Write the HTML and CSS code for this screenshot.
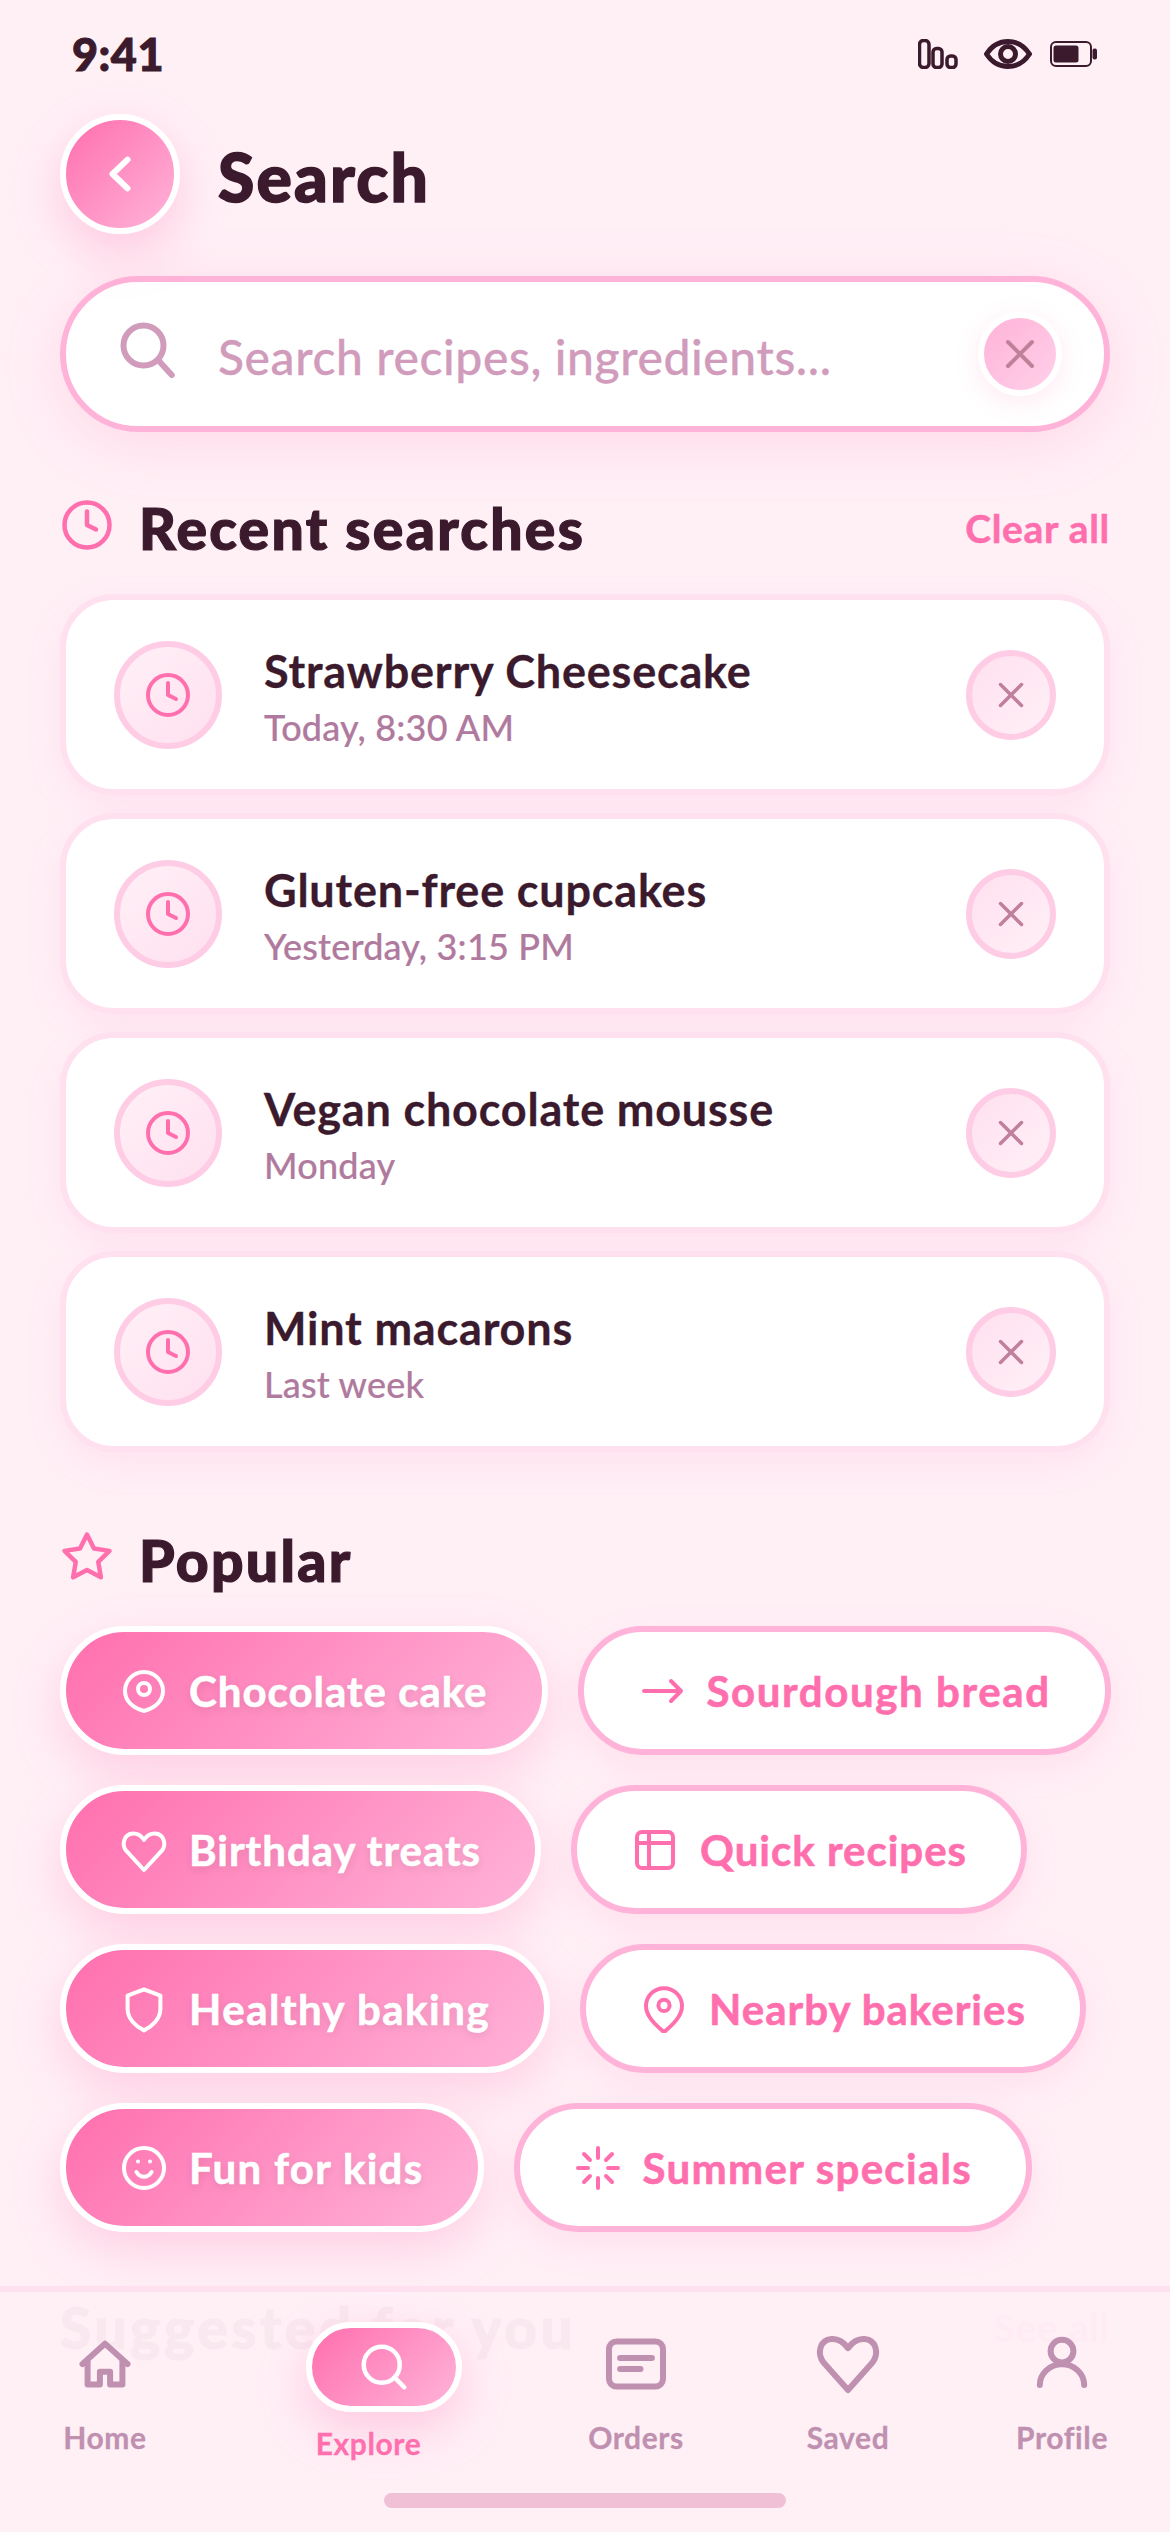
FILE: index.html
```html
<!DOCTYPE html>
<html lang="en">
<head>
<meta charset="utf-8">
<title>Search</title>
<link rel="stylesheet" href="styles.css">
</head>
<body>
<svg class="defs" width="0" height="0" aria-hidden="true">
  <symbol id="clock" viewBox="0 0 24 24"><circle cx="12" cy="12" r="10"/><polyline points="12 6 12 12 16 14"/></symbol>
  <symbol id="close" viewBox="0 0 24 24"><path d="M6 6l12 12M18 6L6 18"/></symbol>
</svg>
<main class="screen">
  <div class="status">
    <span class="time">9:41</span>
    <div class="status-icons">
      <svg class="st-bars" viewBox="0 0 40 30"><rect x="1.500" y="1.500" width="9.500" height="27" rx="4"/><rect x="15" y="9.500" width="9" height="19" rx="3.500"/><rect x="29" y="17" width="9" height="11.500" rx="3.500"/></svg>
      <svg class="st-eye" viewBox="0 0 48 30"><path d="M2.500 15C8 6.500 15.500 2.500 24 2.500S40 6.500 45.500 15C40 23.500 32.500 27.500 24 27.500S8 23.500 2.500 15Z"/><circle cx="24" cy="15" r="7.500"/></svg>
      <svg class="st-batt" viewBox="0 0 47 26"><rect class="b-out" x="1" y="1" width="40" height="24" rx="5"/><rect class="b-fill" x="3.500" y="4.500" width="25" height="17" rx="2.500"/><rect class="b-fill" x="42.500" y="7.500" width="4.500" height="11" rx="2"/></svg>
    </div>
  </div>

  <header class="top">
    <button class="back" aria-label="Back"><svg class="ic-72" viewBox="0 0 24 24"><path d="M14.500 7.200L9.500 12l5 4.800"/></svg></button>
    <h1>Search</h1>
  </header>

  <div class="searchbar">
    <svg class="searchbar-ic" viewBox="0 0 24 24"><circle cx="11" cy="11" r="8"/><path d="M17 17l5.300 5.800"/></svg>
    <span class="placeholder">Search recipes, ingredients...</span>
    <button class="clear" aria-label="Clear"><svg class="ic-48"><use href="#close"/></svg></button>
  </div>

  <section class="recent">
    <div class="sec-head">
      <svg class="sec-ic"><use href="#clock"/></svg>
      <h2>Recent searches</h2>
      <a class="sec-link">Clear all</a>
    </div>
    <ul class="cards">
      <li class="card">
        <span class="card-ic"><svg class="ic-48"><use href="#clock"/></svg></span>
        <div class="card-text"><strong>Strawberry Cheesecake</strong><small>Today, 8:30 AM</small></div>
        <button class="remove" aria-label="Remove"><svg class="ic-42"><use href="#close"/></svg></button>
      </li>
      <li class="card">
        <span class="card-ic"><svg class="ic-48"><use href="#clock"/></svg></span>
        <div class="card-text"><strong>Gluten-free cupcakes</strong><small>Yesterday, 3:15 PM</small></div>
        <button class="remove" aria-label="Remove"><svg class="ic-42"><use href="#close"/></svg></button>
      </li>
      <li class="card">
        <span class="card-ic"><svg class="ic-48"><use href="#clock"/></svg></span>
        <div class="card-text"><strong>Vegan chocolate mousse</strong><small>Monday</small></div>
        <button class="remove" aria-label="Remove"><svg class="ic-42"><use href="#close"/></svg></button>
      </li>
      <li class="card">
        <span class="card-ic"><svg class="ic-48"><use href="#clock"/></svg></span>
        <div class="card-text"><strong>Mint macarons</strong><small>Last week</small></div>
        <button class="remove" aria-label="Remove"><svg class="ic-42"><use href="#close"/></svg></button>
      </li>
    </ul>
  </section>

  <section class="popular">
    <div class="sec-head">
      <svg class="sec-ic" viewBox="0 0 24 24"><polygon points="12 2 15.090 8.260 22 9.270 17 14.140 18.180 21.020 12 17.770 5.820 21.020 7 14.140 2 9.270 8.910 8.260"/></svg>
      <h2>Popular</h2>
    </div>
    <div class="chips">
      <div class="chip-row">
        <a class="chip hot tight"><svg class="ic-48" viewBox="0 0 24 24"><path d="M12 2.500a9.500 9.500 0 0 1 9.500 9.500c0 5-4 8.500-9.500 10-5.500-1.500-9.500-5-9.500-10A9.500 9.500 0 0 1 12 2.500Z"/><circle cx="12" cy="11" r="3"/></svg>Chocolate cake</a>
        <a class="chip loose"><svg class="ic-48" viewBox="0 0 24 24"><path d="M3 12h18M16.500 7l5 5-5 5"/></svg>Sourdough bread</a>
      </div>
      <div class="chip-row">
        <a class="chip hot tight"><svg class="ic-48" viewBox="0 0 24 24"><path d="M12 22L3.300 12.600C.5 9.300 2 4 6.500 3.800 9 3.700 10.700 5 12 6.900c1.300-1.900 3-3.200 5.500-3.100 4.500.2 6 5.500 3.200 8.800Z"/></svg>Birthday treats</a>
        <a class="chip tight"><svg class="ic-48" viewBox="0 0 24 24"><rect x="3" y="3" width="18" height="18" rx="2.500"/><path d="M3 8.500h18M9 3v18"/></svg>Quick recipes</a>
      </div>
      <div class="chip-row">
        <a class="chip hot mid"><svg class="ic-48" viewBox="0 0 24 24"><path d="M12 2.200l8.200 3.100V12c0 5-4.200 8.800-8.200 10.700C8 20.800 3.800 17 3.800 12V5.300Z"/></svg>Healthy baking</a>
        <a class="chip tight"><svg class="ic-48" viewBox="0 0 24 24"><path d="M12 1.600c5 0 9 4 9 8.900 0 5.500-5.500 10-9 13.100-3.500-3.100-9-7.600-9-13.100 0-4.900 4-8.900 9-8.900Z"/><circle cx="12" cy="10.200" r="2.800"/></svg>Nearby bakeries</a>
      </div>
      <div class="chip-row">
        <a class="chip hot"><svg class="ic-48" viewBox="0 0 24 24"><circle cx="12" cy="12" r="10"/><path d="M8.200 14c2 3.200 5.600 3.200 7.600 0M9 8.800h.01M15 8.800h.01"/></svg>Fun for kids</a>
        <a class="chip"><svg class="ic-48" viewBox="0 0 24 24"><path d="M12 2v5M12 17v5M2 12h5M17 12h5M5 5l3 3M16 16l3 3M19 5l-3 3M8 16l-3 3"/></svg>Summer specials</a>
      </div>
    </div>
  </section>

  <section class="suggested">
    <div class="sec-head">
      <h2>Suggested for you</h2>
      <a class="sec-link">See all</a>
    </div>
  </section>

  <nav class="nav">
    <div class="nav-row">
      <a class="nav-item"><svg class="ic-72" viewBox="0 0 24 24"><path d="M4.500 12L12 5.200 19.500 12M6.200 11v7.800h4.100v-4.200h3.400v4.200h4.100V11"/></svg><span>Home</span></a>
      <a class="nav-item active"><span class="pill"><svg class="ic-54" viewBox="0 0 24 24"><circle cx="11" cy="11" r="8"/><path d="M21 21l-4.350-4.350"/></svg></span><span>Explore</span></a>
      <a class="nav-item"><svg class="ic-72" viewBox="0 0 24 24"><rect x="3" y="4.500" width="18" height="15" rx="2.500"/><path d="M6.700 10h10.600M6.700 13.700h6.800"/></svg><span>Orders</span></a>
      <a class="nav-item"><svg class="ic-72" viewBox="0 0 24 24"><path d="M12 20.700L4 11.700C1.500 8.700 2.500 4 6.500 3.700 8.700 3.500 10.500 4.700 12 6.700c1.500-2 3.300-3.200 5.500-3 4 .3 5 5 2.500 8Z"/></svg><span>Saved</span></a>
      <a class="nav-item"><svg class="ic-72" viewBox="0 0 24 24"><circle cx="12" cy="7.700" r="3.800"/><path d="M4.600 19a7.400 6.900 0 0 1 14.800 0"/></svg><span>Profile</span></a>
    </div>
    <div class="home-bar"></div>
  </nav>
</main>
</body>
</html>
```

FILE: styles.css
```css
* { box-sizing: border-box; }
html, body { margin: 0; padding: 0; }
body {
  width: 1170px;
  height: 2532px;
  overflow: hidden;
  background: #fff0f6;
  font-family: Lato, "Noto Sans", sans-serif;
  color: #3a1a2c;
}
.defs { position: absolute; }
h1, h2, ul { margin: 0; padding: 0; }
ul { list-style: none; }
button { padding: 0; font: inherit; cursor: pointer; }
svg { display: block; flex: none; fill: none; stroke: currentColor; stroke-width: 2; stroke-linecap: round; stroke-linejoin: round; }
.ic-72 { width: 72px; height: 72px; }
.ic-54 { width: 54px; height: 54px; }
.ic-48 { width: 48px; height: 48px; }
.ic-42 { width: 42px; height: 42px; }

.screen { position: relative; width: 1170px; height: 2532px; padding: 0 60px; overflow: hidden; }

.status { display: flex; justify-content: space-between; align-items: center; height: 108px; margin: 0 -60px 6px; padding: 0 73px 0 72px; }
.time { font-size: 45px; font-weight: 900; line-height: 1; letter-spacing: .5px; -webkit-text-stroke: 1px currentColor; }
.status-icons { display: flex; align-items: center; gap: 18px; }
.st-bars { width: 40px; height: 30px; margin-right: 8px; stroke-width: 3.500; }
.st-eye { width: 48px; height: 30px; stroke-width: 5; }
.st-batt { width: 47px; height: 26px; }
.b-out { stroke-width: 2; }
.b-fill { fill: currentColor; stroke: none; }

.top { display: flex; align-items: center; gap: 38px; }
.back { display: flex; align-items: center; justify-content: center; width: 120px; height: 120px; border: 6px solid #fff; border-radius: 50%; color: #fff; background: linear-gradient(135deg, #ff6fae, #ffb3d9); box-shadow: 0 18px 48px rgba(255, 111, 174, .3); }
h1 { margin-top: 6px; font-size: 66px; font-weight: 900; line-height: 1.2; letter-spacing: 2.200px; -webkit-text-stroke: 1.500px currentColor; }

.searchbar { display: flex; align-items: center; gap: 42px; height: 156px; margin-top: 42px; padding: 0 42px 0 50px; border: 6px solid #ffb3d9; border-radius: 78px; background: #fff; box-shadow: 0 12px 60px rgba(255, 111, 174, .18); }
.searchbar-ic { width: 60px; height: 60px; margin-bottom: 12px; color: #d19bbb; stroke-width: 2.400; }
.placeholder { flex: 1; padding-top: 5px; font-size: 48px; font-weight: 500; color: #d19bbb; line-height: 1.2; letter-spacing: .6px; -webkit-text-stroke: .3px currentColor; }
.clear { display: flex; align-items: center; justify-content: center; width: 84px; height: 84px; border: 6px solid #fff; border-radius: 50%; color: #c08098; background: linear-gradient(135deg, #ffb3d9, #ffd0e8); box-shadow: 0 6px 24px rgba(255, 111, 174, .15); }

.recent { margin-top: 66px; }
.sec-head { display: flex; align-items: flex-start; gap: 25px; height: 54px; margin-bottom: 42px; }
.sec-ic { width: 54px; height: 54px; color: #ff6fae; }
h2 { font-size: 57px; font-weight: 900; line-height: 60px; letter-spacing: 2.300px; -webkit-text-stroke: 1.200px currentColor; }
.sec-link { margin-left: auto; font-size: 39px; font-weight: 700; line-height: 60px; color: #ff6fae; letter-spacing: .7px; -webkit-text-stroke: .5px currentColor; }

.cards { display: flex; flex-direction: column; gap: 18px; }
.card { display: flex; align-items: center; gap: 42px; height: 201px; padding: 0 48px; border: 6px solid #ffe0ef; border-radius: 54px; background: #fff; box-shadow: 0 12px 36px rgba(255, 111, 174, .1); }
.card-ic { display: flex; align-items: center; justify-content: center; flex: none; width: 108px; height: 108px; border: 6px solid #ffcce6; border-radius: 50%; color: #ff6fae; background: linear-gradient(135deg, #fff0f7, #ffe0ef); }
.card-text { flex: 1; display: flex; flex-direction: column; padding-top: 8px; }
.card-text strong { font-size: 45px; font-weight: 700; line-height: 57px; color: #3a1a2c; letter-spacing: .8px; -webkit-text-stroke: .3px currentColor; }
.card-text small { font-size: 36px; font-weight: 500; line-height: 54px; color: #b07a9e; letter-spacing: .2px; -webkit-text-stroke: .2px currentColor; }
.remove { display: flex; align-items: center; justify-content: center; width: 90px; height: 90px; border: 6px solid #ffcce6; border-radius: 50%; color: #c07f9c; background: linear-gradient(135deg, #ffe0ef, #fff0f7); }

.popular { margin-top: 78px; }
.chips { display: flex; flex-direction: column; gap: 30px; }
.chip-row { display: flex; gap: 30px; }
.chip { display: inline-flex; align-items: center; gap: 21px; height: 129px; padding: 0 54px; border: 6px solid #ffb3d9; border-radius: 64.500px; background: #fff; color: #ff6fae; font-size: 42px; font-weight: 700; letter-spacing: 1.300px; white-space: nowrap; -webkit-text-stroke: .6px currentColor; box-shadow: 0 12px 36px rgba(255, 111, 174, .12); }
.chip.hot { border-color: #fff; color: #fff; background: linear-gradient(135deg, #ff6fae, #ffb3d9); text-shadow: 0 3px 9px rgba(0, 0, 0, .1); box-shadow: 0 18px 48px rgba(255, 111, 174, .25); }
.chip.tight { letter-spacing: 1px; }
.chip.mid { letter-spacing: 1.500px; }
.chip.loose { letter-spacing: 1.600px; }

.suggested { margin-top: 65px; }
.suggested h2 { letter-spacing: 3.500px; }

.nav { position: absolute; left: 0; right: 0; bottom: 0; display: flex; flex-direction: column; height: 246px; border-top: 6px solid #ffe0ef; background: rgba(255, 240, 246, .97); }
.nav-row { display: grid; grid-template-columns: 210px 317px 218px 206px 1fr; padding-top: 36px; }
.nav-item { display: flex; flex-direction: column; align-items: center; gap: 16px; color: #c090b0; font-size: 30px; font-weight: 700; line-height: 42px; letter-spacing: .6px; -webkit-text-stroke: .3px currentColor; }
.nav-item:last-child { padding-left: 3px; }
.nav-item.active { gap: 10px; color: #ff6fae; margin-top: -6px; }
.pill { display: flex; align-items: center; justify-content: center; width: 156px; height: 90px; margin-left: 31px; border: 6px solid #fff; border-radius: 45px; color: #fff; background: linear-gradient(135deg, #ff6fae, #ffb3d9); box-shadow: 0 18px 48px rgba(255, 111, 174, .3); }
.home-bar { width: 402px; height: 15px; margin: auto auto 24px; border-radius: 8px; background: #f0c0d6; }
```
